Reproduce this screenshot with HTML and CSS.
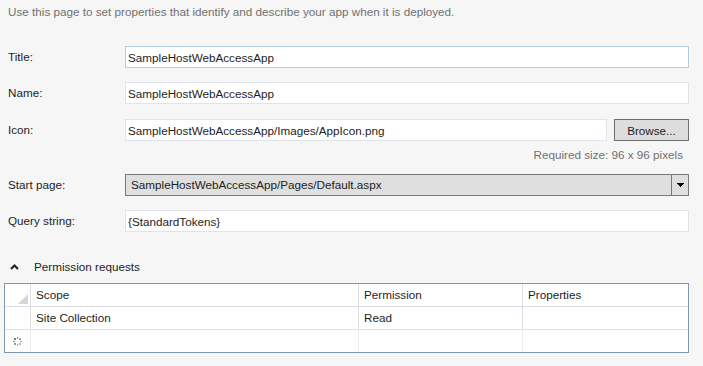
FILE: index.html
```html
<!DOCTYPE html>
<html>
<head>
    <title>App Manifest</title>
    <link rel="stylesheet" href="styles.css">
</head>
<body>
    <div class="page">
        <p class="intro">Use this page to set properties that identify and describe your app when it is deployed.</p>

        <div class="form">
            <label class="label" for="title">Title:</label>
            <div class="field">
                <input class="text-input focused" type="text" id="title" value="SampleHostWebAccessApp">
            </div>

            <label class="label row-name" for="name">Name:</label>
            <div class="field row-name">
                <input class="text-input" type="text" id="name" value="SampleHostWebAccessApp">
            </div>

            <label class="label row-icon" for="icon">Icon:</label>
            <div class="field row-icon">
                <div class="icon-line">
                    <input class="text-input" type="text" id="icon" value="SampleHostWebAccessApp/Images/AppIcon.png">
                    <button class="browse" type="button">Browse...</button>
                </div>
                <div class="hint">Required size: 96 x 96 pixels</div>
            </div>

            <label class="label row-start" for="start">Start page:</label>
            <div class="field row-start">
                <div class="combo" id="start">
                    <span class="combo-text">SampleHostWebAccessApp/Pages/Default.aspx</span>
                    <span class="combo-button">
                        <svg width="7" height="5" viewBox="0 0 7 5"><path d="M0 0h7v1h-1v1h-1v1h-1v1h-1v-1h-1v-1h-1v-1h-1z" fill="#000"/></svg>
                    </span>
                </div>
            </div>

            <label class="label row-query" for="query">Query string:</label>
            <div class="field row-query">
                <input class="text-input" type="text" id="query" value="{StandardTokens}">
            </div>
        </div>

        <div class="section-head">
            <svg class="chevron" width="9" height="6" viewBox="0 0 9 6"><path d="M1 5l3.5-3.5L8 5" fill="none" stroke="#1e1e1e" stroke-width="2"/></svg>
            <span>Permission requests</span>
        </div>

        <table class="grid">
            <tr class="head">
                <td class="rowhead">
                    <svg class="corner" width="10" height="10" viewBox="0 0 10 10"><path d="M10 0v10h-10z" fill="#d6d6d6"/></svg>
                </td>
                <td class="col-scope">Scope</td>
                <td class="col-perm">Permission</td>
                <td>Properties</td>
            </tr>
            <tr>
                <td class="rowhead"></td>
                <td>Site Collection</td>
                <td>Read</td>
                <td></td>
            </tr>
            <tr class="new-row">
                <td class="rowhead">
                    <svg class="spinner" width="9" height="9" viewBox="0 0 9 9">
                        <rect x="4" y="0" width="1" height="2" fill="#8a8a8a"/>
                        <rect x="4" y="7" width="1" height="2" fill="#a8a8a8"/>
                        <rect x="0" y="4" width="2" height="1" fill="#808080"/>
                        <rect x="7" y="4" width="2" height="1" fill="#a0a0a0"/>
                        <rect x="1" y="1" width="2" height="2" fill="#7a7a7a"/>
                        <rect x="6" y="1" width="2" height="2" fill="#a0a0a0"/>
                        <rect x="1" y="6" width="2" height="2" fill="#989898"/>
                        <rect x="6" y="6" width="2" height="2" fill="#b8b8b8"/>
                    </svg>
                </td>
                <td></td>
                <td></td>
                <td></td>
            </tr>
        </table>
    </div>
</body>
</html>
```

FILE: styles.css
```css
body {
    margin: 0;
    background-color: #f6f6f6;
    font-family: "Liberation Sans", Arial, sans-serif;
    font-size: 11.7px;
    color: #1e1e1e;
}
.page {
    padding: 4px 14px 0 8px;
}
.intro {
    margin: 0;
    line-height: 16px;
    color: #717171;
}

/* form rows */
.form {
    display: grid;
    grid-template-columns: 117px 1fr;
    align-items: start;
    margin-top: 26px;
}
.label {
    line-height: 22px;
}
.row-name {
    margin-top: 14px;
}
.row-icon {
    margin-top: 15px;
}
.row-start {
    margin-top: 11px;
}
.row-query {
    margin-top: 14px;
}
.text-input {
    display: block;
    box-sizing: border-box;
    width: 100%;
    height: 22px;
    margin: 0;
    padding: 0 2px;
    border: 1px solid #e2e2ec;
    background-color: #fff;
    font-family: inherit;
    font-size: inherit;
    color: #1e1e1e;
    outline: none;
}
.text-input.focused {
    border-color: #b4cde6;
}
.icon-line {
    display: flex;
    gap: 7px;
}
.icon-line .text-input {
    flex: 1;
}
.browse {
    box-sizing: border-box;
    width: 75px;
    height: 22px;
    padding: 0;
    border: 1px solid #707070;
    background-color: #dddddd;
    font-family: inherit;
    font-size: inherit;
    color: #1e1e1e;
}
.hint {
    margin-top: 6px;
    padding-right: 6px;
    line-height: 16px;
    text-align: right;
    color: #717171;
}

/* combo box */
.combo {
    display: flex;
    box-sizing: border-box;
    height: 22px;
    border: 1px solid #7a7a7a;
    background-color: #dfdfdf;
}
.combo-text {
    flex: 1;
    padding-left: 5px;
    line-height: 20px;
}
.combo-button {
    display: flex;
    align-items: center;
    justify-content: center;
    width: 16px;
    border-left: 1px solid #7a7a7a;
}

/* permissions */
.section-head {
    display: flex;
    align-items: center;
    gap: 15px;
    margin-top: 27px;
    padding-left: 2px;
    line-height: 16px;
}
.chevron {
    display: block;
}
.grid {
    width: 685px;
    margin: 8px 0 0 -4px;
    border: 1px solid #7d98b5;
    border-collapse: separate;
    border-spacing: 0;
    background-color: #fff;
    table-layout: fixed;
}
.grid td {
    box-sizing: border-box;
    height: 23px;
    padding: 0 5px;
    border-right: 1px solid #dedde7;
    border-bottom: 1px solid #dedde7;
    line-height: 22px;
    white-space: nowrap;
}
.grid td:last-child {
    border-right: none;
}
.grid .new-row td {
    height: 22px;
    border-bottom: none;
    border-right-color: #eeeef3;
}
.grid .rowhead {
    width: 26px;
    padding: 0;
    position: relative;
}
.grid .col-scope {
    width: 328px;
}
.grid .col-perm {
    width: 164px;
}
.corner {
    position: absolute;
    right: 2px;
    bottom: 2px;
}
.spinner {
    display: block;
    margin: 0 auto;
}
```
